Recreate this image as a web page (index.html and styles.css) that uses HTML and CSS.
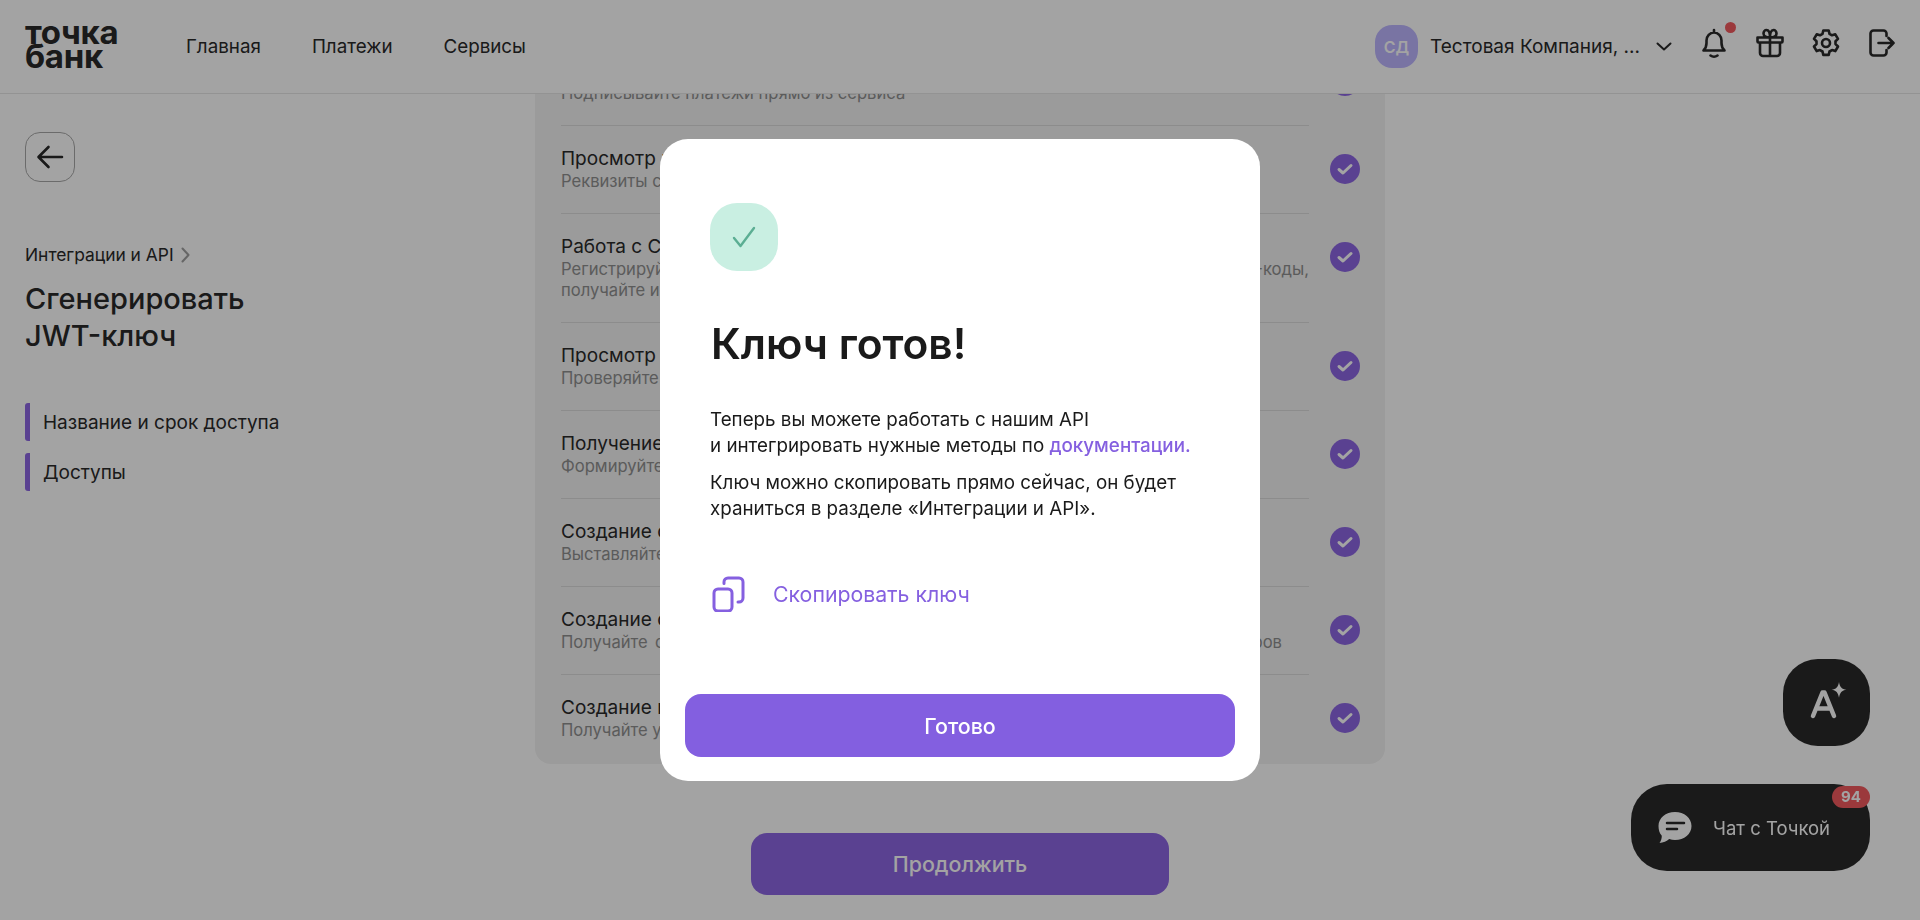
FILE: index.html
```html
<!DOCTYPE html>
<html lang="ru">
<head>
  <meta charset="UTF-8" />
  <meta name="viewport" content="width=device-width, initial-scale=1.0" />
  <title>Сгенерировать JWT-ключ</title>
  <link rel="stylesheet" href="styles.css">
</head>
<body>

  <header class="header">
    <div class="logo">точка<br>банк</div>
    <nav class="nav">
      <a>Главная</a>
      <a>Платежи</a>
      <a>Сервисы</a>
    </nav>
    <div class="account">
      <div class="avatar">СД</div>
      <span class="company">Тестовая Компания, ...</span>
      <svg class="chevron" width="16" height="9" viewBox="0 0 16 9"><path d="M1.500 1.500 8 7.500l6.500-6"/></svg>
    </div>
    <div class="header-icons">
      <div class="bell">
        <svg width="30" height="32" viewBox="0 0 30 32"><path d="M15 3v2.500M4.500 23.500h21c-2-2-3-4-3-7.500v-2.500a7.500 8 0 0 0-15 0V16c0 3.500-1 5.500-3 7.500Z"/><path d="M11.500 28.500c2 1.400 5 1.400 7 0"/></svg>
        <span class="dot"></span>
      </div>
      <svg width="30" height="30" viewBox="0 0 30 30"><path d="M2.500 9.500h25v4a1 1 0 0 1-1 1h-23a1 1 0 0 1-1-1zM5 14.500V25a3 3 0 0 0 3 3h14a3 3 0 0 0 3-3V14.500M15 9.500V28M15 9.500c-3 0-6.500-.8-6.500-4 0-2 1.300-3.500 3-3.500 2.300 0 3.500 3 3.500 7.500Zm0 0c3 0 6.500-.8 6.500-4 0-2-1.300-3.500-3-3.500-2.300 0-3.500 3-3.500 7.500Z"/></svg>
      <svg width="30" height="30" viewBox="0 0 30 30"><path d="M12.300 2.500h5.400l.8 3.400 2.500 1.400 3.300-1 2.700 4.600-2.500 2.400v2.800l2.500 2.400-2.700 4.600-3.300-1-2.500 1.400-.8 3.400h-5.400l-.8-3.400-2.500-1.400-3.300 1-2.700-4.600 2.500-2.400v-2.800l-2.500-2.400 2.700-4.600 3.300 1 2.500-1.400Z"/><circle cx="15" cy="15" r="4"/></svg>
      <svg width="28" height="30" viewBox="0 0 28 30"><path d="M19.500 8V5.500a3 3 0 0 0-3-3H6.500a3 3 0 0 0-3 3v19a3 3 0 0 0 3 3h10a3 3 0 0 0 3-3V22M11.500 15h15M21.500 10l5 5-5 5"/></svg>
    </div>
  </header>

  <main class="main">
    <aside class="sidebar">
      <button class="back-btn">
        <svg width="28" height="24" viewBox="0 0 28 24"><path d="M26 12H3M12.500 2 2.500 12l10 10"/></svg>
      </button>
      <div class="crumb">
        Интеграции и API
        <svg width="9" height="16" viewBox="0 0 9 16"><path d="m1.500 1.500 6 6.500-6 6.500"/></svg>
      </div>
      <h2 class="page-title">Сгенерировать<br>JWT-ключ</h2>
      <ul class="steps">
        <li>Название и срок доступа</li>
        <li>Доступы</li>
      </ul>
    </aside>

    <section class="center">
      <div class="card">
        <div class="row">
          <div class="row-body">
            <div class="row-title">Подпись платежей</div>
            <div class="row-sub">Подписывайте платежи прямо из сервиса</div>
          </div>
          <div class="check"><svg width="30" height="30" viewBox="0 0 30 30"><path d="m9 15.500 4 3.500 8-7.500"/></svg></div>
        </div>
        <div class="row">
          <div class="row-body">
            <div class="row-title">Просмотр реквизитов</div>
            <div class="row-sub">Реквизиты счетов всегда под рукой</div>
          </div>
          <div class="check"><svg width="30" height="30" viewBox="0 0 30 30"><path d="m9 15.500 4 3.500 8-7.500"/></svg></div>
        </div>
        <div class="row">
          <div class="row-body">
            <div class="row-title">Работа с СБП</div>
            <div class="row-sub"><span class="line-full">Регистрируйте юрлица и точки продаж в СБП, создавайте и отслеживайте QR-коды,</span>получайте информацию о платежах</div>
          </div>
          <div class="check"><svg width="30" height="30" viewBox="0 0 30 30"><path d="m9 15.500 4 3.500 8-7.500"/></svg></div>
        </div>
        <div class="row">
          <div class="row-body">
            <div class="row-title">Просмотр баланса</div>
            <div class="row-sub">Проверяйте остаток на счетах</div>
          </div>
          <div class="check"><svg width="30" height="30" viewBox="0 0 30 30"><path d="m9 15.500 4 3.500 8-7.500"/></svg></div>
        </div>
        <div class="row">
          <div class="row-body">
            <div class="row-title">Получение выписки</div>
            <div class="row-sub">Формируйте выписки за любой период</div>
          </div>
          <div class="check"><svg width="30" height="30" viewBox="0 0 30 30"><path d="m9 15.500 4 3.500 8-7.500"/></svg></div>
        </div>
        <div class="row">
          <div class="row-body">
            <div class="row-title">Создание счетов</div>
            <div class="row-sub">Выставляйте счета покупателям</div>
          </div>
          <div class="check"><svg width="30" height="30" viewBox="0 0 30 30"><path d="m9 15.500 4 3.500 8-7.500"/></svg></div>
        </div>
        <div class="row">
          <div class="row-body">
            <div class="row-title">Создание ссылок</div>
            <div class="row-sub"><span class="line-full line-short">Получайте средства по ссылке без подключения сайта и иных сторонних партнёров</span></div>
          </div>
          <div class="check"><svg width="30" height="30" viewBox="0 0 30 30"><path d="m9 15.500 4 3.500 8-7.500"/></svg></div>
        </div>
        <div class="row">
          <div class="row-body">
            <div class="row-title">Создание подписок</div>
            <div class="row-sub">Получайте удобные регулярные платежи</div>
          </div>
          <div class="check"><svg width="30" height="30" viewBox="0 0 30 30"><path d="m9 15.500 4 3.500 8-7.500"/></svg></div>
        </div>
      </div>
      <button class="continue-btn">Продолжить</button>
    </section>
  </main>

  <!-- Floating widgets -->
  <button class="assist-btn">
    <svg width="42" height="42" viewBox="0 0 42 42"><path class="assist-a" d="M5 34 14.500 10.500h2L26 34M8.500 26.500h14"/><path class="assist-star" d="M31 0c.8 5 2.800 7.200 7.500 7.800-4.700.7-6.700 2.900-7.500 7.900-.8-5-2.800-7.200-7.500-7.900C28.200 7.200 30.200 5 31 0Z"/></svg>
  </button>
  <button class="chat-btn">
    <svg width="34" height="32" viewBox="0 0 34 32"><path class="chat-bubble" d="M17 0c9.300 0 16.500 6 16.500 14S26.300 28 17 28c-2 0-4-.3-5.800-.9-2.300 2.200-6 3.800-9.700 3.900 1.500-2 2.300-4.300 2.300-7.200C1.500 21.300.5 17.800.5 14 .5 6 7.700 0 17 0Z"/><path class="chat-lines" d="M9 11h17M9 17h10"/></svg>
    <span>Чат с Точкой</span>
    <span class="chat-badge">94</span>
  </button>

  <div class="overlay">
    <div class="modal">
      <div class="modal-icon">
        <svg width="24" height="22" viewBox="0 0 24 22"><path d="m2 12 6.500 8L22 2"/></svg>
      </div>
      <h1 class="modal-title">Ключ готов!</h1>
      <p class="modal-text">Теперь вы можете работать с нашим API<br>и интегрировать нужные методы по <a class="doc-link">документации.</a></p>
      <p class="modal-text">Ключ можно скопировать прямо сейчас, он будет<br>храниться в разделе «Интеграции и API».</p>
      <div class="copy-row">
        <svg width="34" height="36" viewBox="0 0 34 36"><rect x="2" y="13" width="18" height="22" rx="4"/><path d="M12 7.500V6a4 4 0 0 1 4-4h11a4 4 0 0 1 4 4v16a4 4 0 0 1-4 4h-1"/></svg>
        <span>Скопировать ключ</span>
      </div>
      <button class="done-btn">Готово</button>
    </div>
  </div>

</body>
</html>
```

FILE: styles.css
```css
* {
  box-sizing: border-box;
}

body {
  margin: 0;
  height: 920px;
  overflow: hidden;
  display: flex;
  flex-direction: column;
  font-family: Inter, "Noto Sans", sans-serif;
  color: #292929;
  background: #fff;
}

button {
  border: none;
  font-family: inherit;
  cursor: pointer;
}

svg {
  display: block;
  fill: none;
  stroke: currentColor;
  stroke-width: 2.600;
  stroke-linecap: round;
  stroke-linejoin: round;
}

/* Header */
.header {
  height: 94px;
  flex: none;
  display: flex;
  align-items: center;
  padding: 0 25px;
  border-bottom: 1px solid #e6e6e6;
  background: #fff;
}

.logo {
  width: 161px;
  margin-top: -6px;
  font-size: 33px;
  line-height: 24px;
  font-weight: 700;
  letter-spacing: -0.3px;
}

.nav {
  display: flex;
  gap: 51px;
  font-size: 18.800px;
}

.account {
  margin-left: auto;
  display: flex;
  align-items: center;
  margin-right: 27px;
}

.avatar {
  width: 43px;
  height: 43px;
  border-radius: 40%;
  display: flex;
  align-items: center;
  justify-content: center;
  margin-right: 12px;
  background: #bdb6ff;
  color: #fff;
  font-size: 16px;
  font-weight: 600;
}

.company {
  width: 226px;
  font-size: 19px;
  white-space: nowrap;
}

.chevron {
  stroke-width: 2;
}

.header-icons {
  display: flex;
  align-items: center;
  gap: 26px;
  margin-top: -7px;
}

.bell {
  position: relative;
}

.dot {
  position: absolute;
  top: -5px;
  right: -7px;
  width: 11px;
  height: 11px;
  border-radius: 50%;
  background: #f25a5f;
}

/* Main layout */
.main {
  flex: 1;
  display: grid;
  grid-template-columns: 535px 850px;
  overflow: hidden;
}

.sidebar {
  padding: 38px 25px 0;
}

.back-btn {
  width: 50px;
  height: 50px;
  padding: 0;
  display: flex;
  align-items: center;
  justify-content: center;
  border: 1px solid #a8a8a8;
  border-radius: 15px;
  background: transparent;
  color: #292929;
}

.crumb {
  margin-top: 62px;
  display: flex;
  align-items: center;
  gap: 7px;
  font-size: 17.400px;
}

.crumb svg {
  stroke: #a0a0a0;
  stroke-width: 2;
}

.page-title {
  margin: 15px 0 0;
  font-size: 29px;
  line-height: 37px;
  font-weight: 500;
}

.steps {
  list-style: none;
  margin: 49px 0 0;
  padding: 0;
  display: flex;
  flex-direction: column;
  gap: 12px;
}

.steps li {
  height: 38px;
  display: flex;
  align-items: center;
  padding-left: 13px;
  border-left: 5px solid #8d67e3;
  border-radius: 3px;
  font-size: 19px;
}

.center {
  display: flex;
  flex-direction: column;
  align-items: center;
}

.card {
  width: 100%;
  margin-top: -76px;
  padding: 20px 25px 2px 26px;
  border-radius: 16px;
  background: #f2f2f2;
}

.row {
  display: flex;
  gap: 21px;
}

.row-body {
  width: 748px;
  padding: 21px 0;
  border-bottom: 1px solid #dcdcdc;
}

.row:last-child .row-body {
  border-bottom: none;
}

.row-title {
  font-size: 19px;
  line-height: 24px;
}

.row-sub {
  font-size: 16.600px;
  line-height: 21px;
  color: #8f8f8f;
  white-space: nowrap;
}

/* full-width line, its tail shows past the modal */
.line-full {
  display: block;
  white-space: normal;
  text-align-last: justify;
}

.line-short {
  width: 721px;
}

.check {
  flex: none;
  width: 30px;
  height: 30px;
  margin-top: 28px;
  border-radius: 50%;
  background: #8d67e3;
  color: #fff;
}

.check svg {
  stroke-width: 3;
}

.continue-btn {
  width: 418px;
  height: 62px;
  margin-top: 69px;
  border-radius: 16px;
  background: #8d67e3;
  color: #fff;
  font-size: 21.400px;
  font-weight: 500;
}

/* Floating widgets */
.assist-btn {
  position: fixed;
  top: 659px;
  right: 50px;
  width: 87px;
  height: 87px;
  padding: 0 0 0 25px;
  border-radius: 40%;
  background: #292929;
  color: #fff;
}

.assist-a {
  stroke-width: 4.500;
}

.assist-star {
  fill: #fff;
  stroke: none;
}

.chat-btn {
  position: fixed;
  top: 784px;
  right: 50px;
  width: 239px;
  height: 87px;
  padding: 0 0 0 27px;
  display: flex;
  align-items: center;
  gap: 21px;
  border-radius: 36px;
  background: #292929;
  color: #fff;
  font-size: 18.500px;
}

.chat-bubble {
  fill: #fff;
  stroke: none;
}

.chat-lines {
  stroke: #292929;
  stroke-width: 2.500;
}

.chat-badge {
  position: absolute;
  top: 2px;
  right: 0;
  width: 38px;
  height: 22px;
  border-radius: 11px;
  background: #f25a5f;
  font-size: 15px;
  line-height: 22px;
  font-weight: 700;
  text-align: center;
}

/* Modal */
.overlay {
  position: fixed;
  inset: 0;
  display: flex;
  align-items: center;
  justify-content: center;
  background: rgba(0, 0, 0, 0.36);
}

.modal {
  width: 600px;
  height: 642px;
  padding: 64px 25px 24px;
  display: flex;
  flex-direction: column;
  border-radius: 28px;
  background: #fff;
}

.modal-icon {
  width: 68px;
  height: 68px;
  margin-left: 25px;
  display: flex;
  align-items: center;
  justify-content: center;
  border-radius: 40%;
  background: #c9efe2;
  color: #5bae93;
}

.modal-icon svg {
  stroke-width: 2.400;
}

.modal-title {
  margin: 46px 0 0 26px;
  font-size: 42.400px;
  line-height: 54px;
  font-weight: 600;
  color: #1a1a1a;
}

.modal-text {
  margin: 36px 0 0 25px;
  font-size: 18.800px;
  line-height: 26px;
  color: #1a1a1a;
}

.modal-text + .modal-text {
  margin-top: 11px;
}

.doc-link {
  color: #8560e0;
  font-weight: 500;
}

.copy-row {
  margin: 54px 0 0 27px;
  display: flex;
  align-items: center;
  gap: 27px;
  color: #8560e0;
  font-size: 21.300px;
}

.copy-row svg {
  stroke-width: 3;
}

.done-btn {
  margin-top: auto;
  height: 63px;
  border-radius: 16px;
  background: #835fe0;
  color: #fff;
  font-size: 21.400px;
  font-weight: 500;
}
```
